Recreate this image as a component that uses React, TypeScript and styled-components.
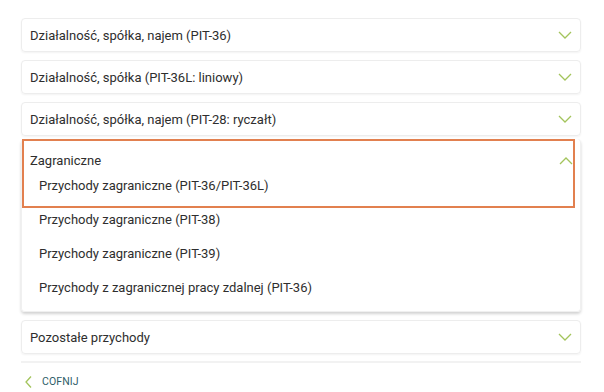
import React from "react";
import styled, { createGlobalStyle } from "styled-components";

const GlobalStyle = createGlobalStyle`
    body {
        margin: 0;
        background: #ffffff;
        font-family: Roboto, "Liberation Sans", sans-serif;
        color: #2e2e2e;
    }
`;

const Page = styled.div`
    width: 604px;
    height: 392px;
    padding: 18px 23px 0 21px;
    box-sizing: border-box;
    display: flex;
    flex-direction: column;
`;

const Card = styled.div<{ gapTop: number }>`
    margin-top: ${(props) => props.gapTop}px;
    height: 34px;
    box-sizing: border-box;
    border: 1px solid #ededed;
    border-radius: 4px;
    box-shadow: 0 1px 2px rgba(0, 0, 0, 0.05);
    display: flex;
    align-items: center;
    justify-content: space-between;
    padding: 0 8px 0 8px;
    font-size: 13px;
`;

const Expanded = styled.div`
    margin-top: 3px;
    height: 173px;
    box-sizing: border-box;
    border: 1px solid #f0f0f0;
    border-top: none;
    border-radius: 4px;
    box-shadow: 0 2px 3px rgba(0, 0, 0, 0.18);
    display: flex;
    flex-direction: column;
    font-size: 13px;
`;

const Highlight = styled.div`
    border: 2px solid #e2804f;
    margin: 0 5px -5px 0;
    padding: 12px 0 3px;
    position: relative;
    z-index: 1;
`;

const Header = styled.div`
    height: 16px;
    line-height: 16px;
    padding: 0 0 0 6px;
    display: flex;
    align-items: center;
    justify-content: space-between;
`;

const Item = styled.div<{ inset: number }>`
    height: 34px;
    line-height: 34px;
    padding-left: ${(props) => props.inset}px;
    font-size: 13px;
    color: #2e2e2e;
`;

const Divider = styled.div`
    margin-top: 7px;
    height: 2px;
    background: #f2f2f2;
`;

const Back = styled.div`
    margin-top: 12px;
    display: flex;
    align-items: center;
    gap: 10px;
    padding-left: 4px;
    font-size: 10.5px;
    color: #2f5d68;
    letter-spacing: 0.1px;
`;

const Chevron = ({ up }: { up?: boolean }) => (
    <svg width="14" height="8" viewBox="0 0 14 8">
        <polyline
            points={up ? "1,7 7,1 13,7" : "1,1 7,7 13,1"}
            fill="none"
            stroke="#a3c45c"
            strokeWidth="1.3"
        />
    </svg>
);

const BackArrow = () => (
    <svg width="7" height="12" viewBox="0 0 7 12">
        <polyline points="6,0.5 1,6 6,11.5" fill="none" stroke="#a3c45c" strokeWidth="1.3" />
    </svg>
);

const foreign = [
    "Przychody zagraniczne (PIT-38)",
    "Przychody zagraniczne (PIT-39)",
    "Przychody z zagranicznej pracy zdalnej (PIT-36)",
];

export default function App() {
    return (
        <>
            <GlobalStyle />
            <Page>
                <Card gapTop={0}>
                    <span>Działalność, spółka, najem (PIT-36)</span>
                    <Chevron />
                </Card>
                <Card gapTop={8}>
                    <span>Działalność, spółka (PIT-36L: liniowy)</span>
                    <Chevron />
                </Card>
                <Card gapTop={8}>
                    <span>Działalność, spółka, najem (PIT-28: ryczałt)</span>
                    <Chevron />
                </Card>
                <Expanded>
                    <Highlight>
                        <Header>
                            <span>Zagraniczne</span>
                            <Chevron up />
                        </Header>
                        <Item inset={15}>Przychody zagraniczne (PIT-36/PIT-36L)</Item>
                    </Highlight>
                    {foreign.map((f) => (
                        <Item key={f} inset={17}>
                            {f}
                        </Item>
                    ))}
                </Expanded>
                <Card gapTop={8}>
                    <span>Pozostałe przychody</span>
                    <Chevron />
                </Card>
                <Divider />
                <Back>
                    <BackArrow />
                    <span>COFNIJ</span>
                </Back>
            </Page>
        </>
    );
}
